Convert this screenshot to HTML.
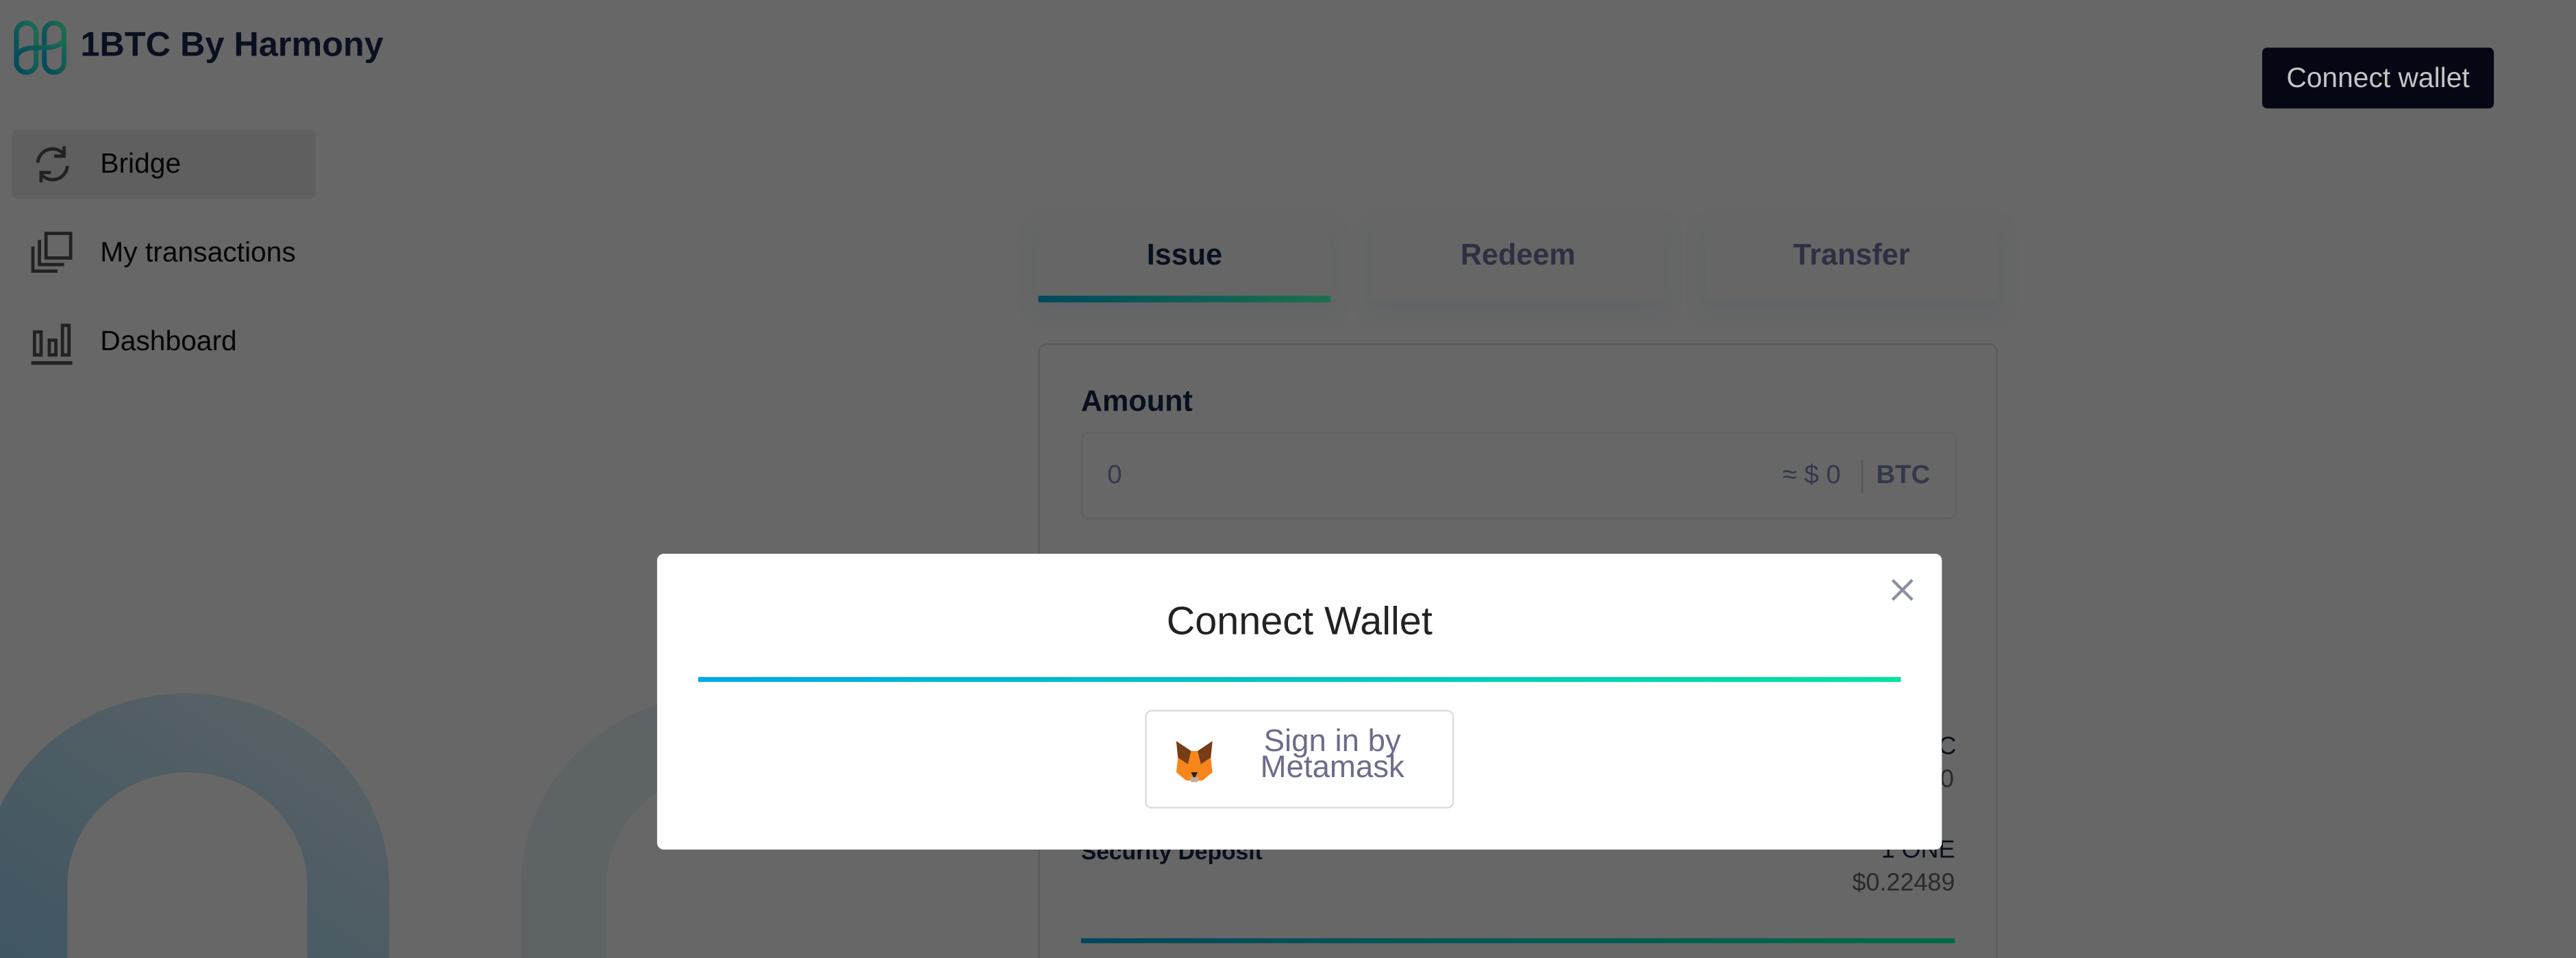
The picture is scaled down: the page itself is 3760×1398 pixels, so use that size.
<!DOCTYPE html>
<html><head><meta charset="utf-8"><style>
html,body{margin:0;padding:0;width:3760px;height:1398px;overflow:hidden;background:#676767;}
#s{position:absolute;left:0;top:0;width:1568px;height:583px;transform:scale(2.39796);transform-origin:0 0;font-family:"Liberation Sans",sans-serif;background:#676767;overflow:hidden;}
.a{position:absolute;}
.nav{position:absolute;left:61px;font-size:17px;color:#050505;}
.tab{position:absolute;top:133px;width:178px;height:50px;background:#666;box-shadow:0 6px 10px rgba(80,95,100,.35);text-align:center;font-weight:bold;font-size:18px;line-height:44px;color:#2c3142;}
</style></head><body><div id="s">
<svg class="a" style="left:0;top:0" width="400" height="583">
<defs><linearGradient id="ag" x1="0" y1="1" x2="1" y2="0"><stop offset="0" stop-color="#3f5662"/><stop offset="1" stop-color="#5c6366"/></linearGradient></defs>
<path d="M-11 583 L-11 539 A124 117 0 0 1 237 539 L237 583 L187 583 L187 539 A73 69 0 0 0 41 539 L41 583 Z" fill="url(#ag)"/>
<path d="M317 583 L317 539 A124 117 0 0 1 565 539 L565 583 L515 583 L515 539 A73 69 0 0 0 369 539 L369 583 Z" fill="#5e6365"/>
</svg>
<svg class="a" style="left:8px;top:12px" width="34" height="34" viewBox="0 0 34 34">
<defs><linearGradient id="lg" x1="0" y1="1" x2="1" y2="0"><stop offset="0" stop-color="#02485e"/><stop offset="1" stop-color="#1f6d50"/></linearGradient></defs>
<g fill="none" stroke="url(#lg)" stroke-width="3">
<rect x="2" y="2" width="12" height="30" rx="6"/><rect x="19" y="2" width="12" height="30" rx="6"/>
<path d="M2 22 C8 12 25 22 31 12"/></g></svg>
<div class="a" style="left:49px;top:16px;font-size:21px;font-weight:bold;color:#0a1020;">1BTC By Harmony</div>
<div class="a" style="left:7px;top:79px;width:185px;height:42px;background:#5f5f5f;border-radius:4px;"></div>
<svg class="a" style="left:20px;top:88px" width="24" height="24" viewBox="0 0 24 24" fill="none" stroke="#222" stroke-width="2"><path d="M3 11 A9 9 0 0 1 19 6"/><path d="M19 1 V7 H13"/><path d="M21 13 A9 9 0 0 1 5 18"/><path d="M5 23 V17 H11"/></svg>
<div class="nav" style="top:90px;">Bridge</div>
<svg class="a" style="left:19px;top:141px" width="26" height="26" viewBox="0 0 26 26" fill="none" stroke="#222" stroke-width="2"><rect x="9" y="1" width="15" height="15"/><path d="M5 5 V20 H20"/><path d="M1 9 V24 H16"/></svg>
<div class="nav" style="top:144px;">My transactions</div>
<svg class="a" style="left:19px;top:196px" width="26" height="26" viewBox="0 0 26 26" fill="none" stroke="#222" stroke-width="2"><rect x="2" y="6" width="4" height="14"/><rect x="11" y="11" width="4" height="9"/><rect x="19" y="2" width="4" height="18"/><path d="M0 25 H25" stroke-width="2.5"/></svg>
<div class="nav" style="top:198px;">Dashboard</div>
<div class="a" style="left:1377px;top:29px;width:141px;height:37px;background:#050814;border-radius:3px;color:#c4c4c4;font-size:17px;line-height:37px;text-align:center;">Connect wallet</div>
<div class="tab" style="left:632px;color:#08101e;">Issue</div>
<div class="a" style="left:632px;top:180px;width:178px;height:4px;background:linear-gradient(90deg,#00485c,#1e6f4e);"></div>
<div class="tab" style="left:835px;">Redeem</div>
<div class="tab" style="left:1038px;">Transfer</div>
<div class="a" style="left:632px;top:209px;width:582px;height:400px;border:1px solid #5b5b5b;border-radius:5px;"></div>
<div class="a" style="left:658px;top:234px;font-size:18px;font-weight:bold;color:#08101e;">Amount</div>
<div class="a" style="left:658px;top:263px;width:531px;height:51px;border:1px solid #616161;border-radius:4px;"></div>
<div class="a" style="left:674px;top:281px;font-size:16px;color:#33394a;">0</div>
<div class="a" style="left:1085px;top:281px;font-size:16px;color:#33394a;">≈ $ 0</div>
<div class="a" style="left:1133px;top:280px;width:1px;height:20px;background:#555;"></div>
<div class="a" style="left:1142px;top:281px;font-size:16px;font-weight:bold;color:#33394a;">BTC</div>
<div class="a" style="left:1180px;top:446px;font-size:15px;color:#08101e;">C</div>
<div class="a" style="left:1181px;top:466px;font-size:15px;color:#2a2a2a;">0</div>
<div class="a" style="left:658px;top:510px;font-size:14px;font-weight:bold;color:#08101e;">Security Deposit</div>
<div class="a" style="left:1100px;top:509px;width:90px;text-align:right;font-size:15px;color:#08101e;">1 ONE</div>
<div class="a" style="left:1090px;top:529px;width:100px;text-align:right;font-size:15px;color:#2a2a2a;">$0.22489</div>
<div class="a" style="left:658px;top:571px;width:532px;height:3px;background:linear-gradient(90deg,#00485c,#006a48);"></div>
<div class="a" style="left:400px;top:337px;width:782px;height:180px;background:#fff;border-radius:4px;">
<div class="a" style="left:0;top:28px;width:782px;text-align:center;font-size:24px;color:#222;">Connect Wallet</div>
<svg class="a" style="left:751px;top:15px" width="14" height="14" viewBox="0 0 14 14" stroke="#8a8fa0" stroke-width="1.8"><path d="M1 1 L13 13 M13 1 L1 13"/></svg>
<div class="a" style="left:25px;top:75px;width:732px;height:3px;background:linear-gradient(90deg,#00a9e6,#00e2a0);"></div>
<div class="a" style="left:297px;top:95px;width:186px;height:58px;border:1px solid #dcdcdc;border-radius:4px;">
<svg class="a" style="left:17px;top:17px" width="24" height="26" viewBox="0 0 24 26"><path d="M1 1 L10 7 H14 L23 1 L22 11 L23 20 L17 25 H7 L1 20 L2 11 Z" fill="#f6851b"/><path d="M1 1 L10 7 L8 15 L2 11 Z M23 1 L14 7 L16 15 L22 11 Z" fill="#763d16"/><path d="M10 20 H14 L12 24 Z" fill="#222"/><path d="M9 23 H15 L14 26 H10 Z" fill="#c0ad9e"/></svg>
<div class="a" style="left:55px;top:11px;width:116px;text-align:center;font-size:19px;line-height:16px;color:#6b6d8c;">Sign in by<br>Metamask</div>
</div>
</div>
</div></body></html>
